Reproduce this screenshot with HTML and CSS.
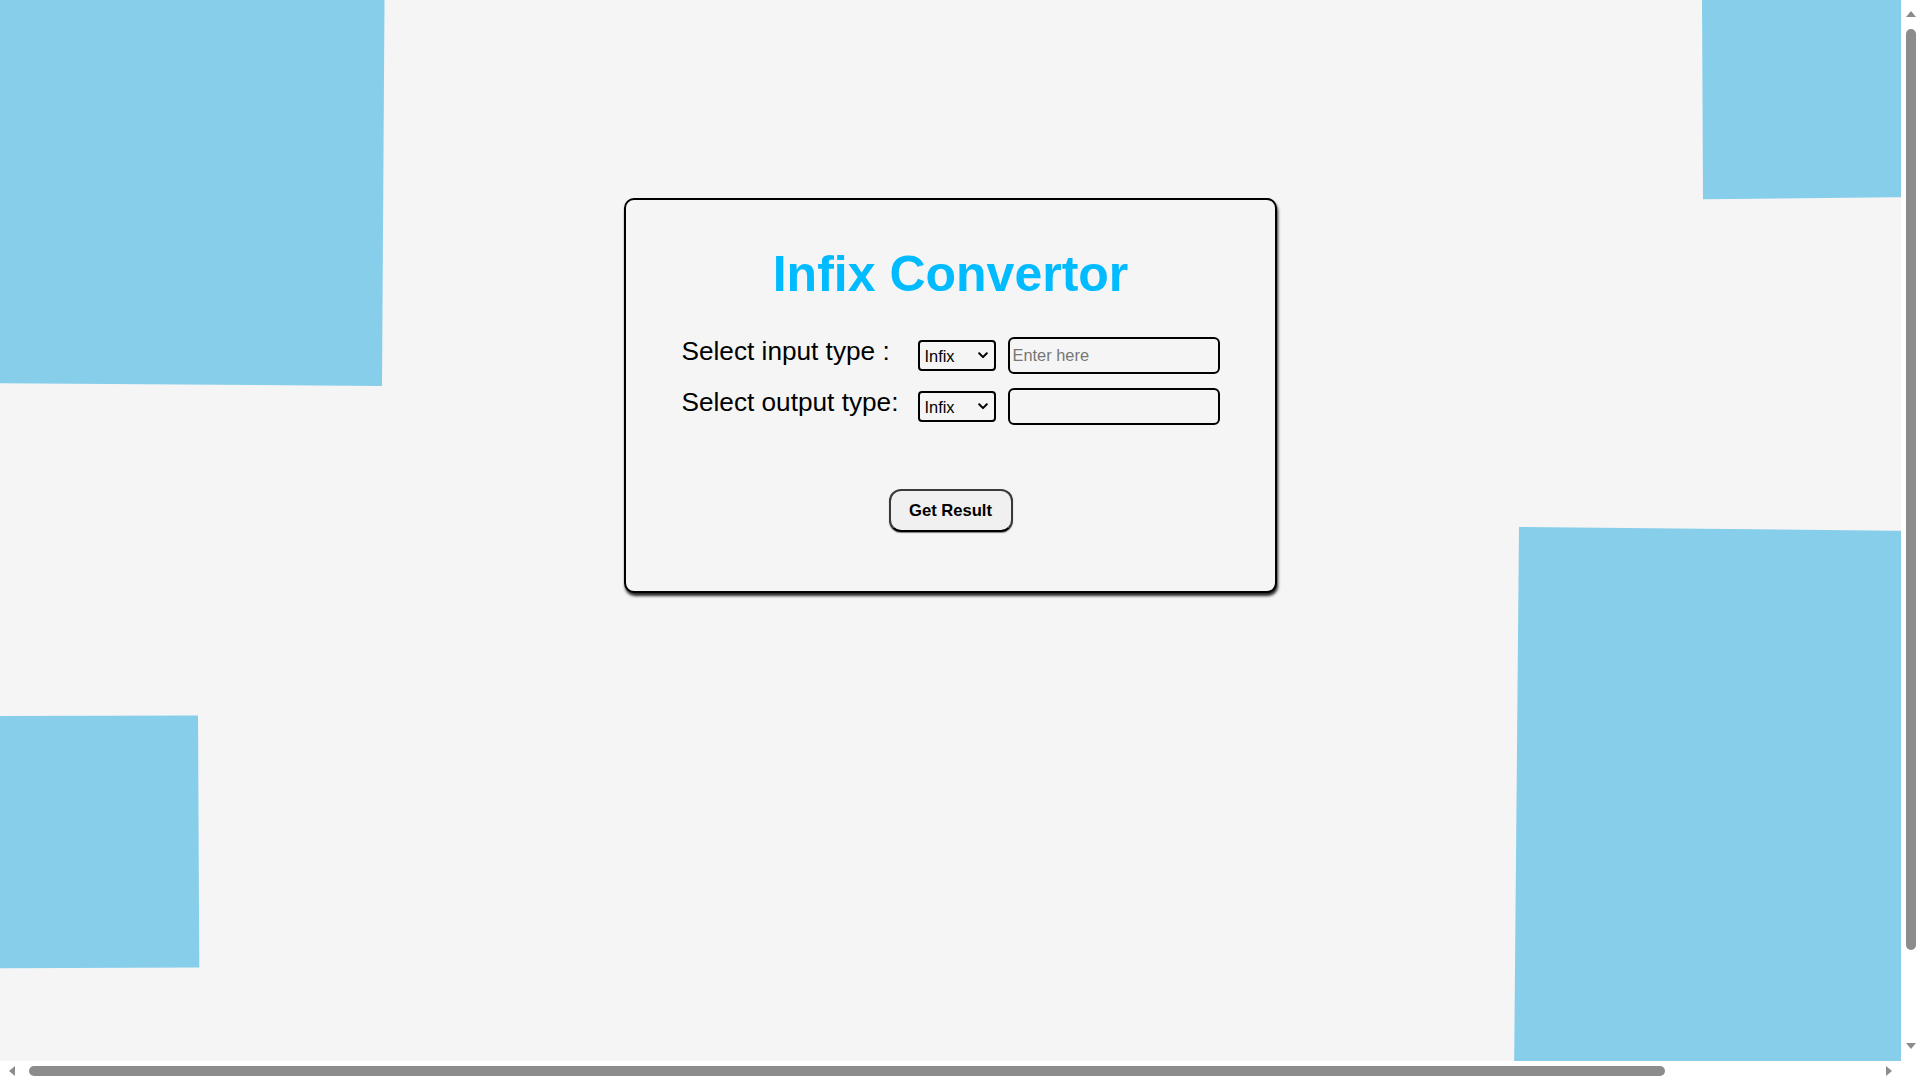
FILE: index.html
```html
<!DOCTYPE html>
<html lang="en">
<head>
<meta charset="utf-8">
<title>Infix Convertor</title>
<link rel="stylesheet" href="styles.css">
</head>
<body>
<svg class="backdrop" width="1920" height="1080" viewBox="0 0 1920 1080" aria-hidden="true">
  <polygon points="0,0 384.5,0 382,386 0,383.3"/>
  <polygon points="1702,0 1920,0 1920,197 1703,199.3"/>
  <polygon points="1519,527 1920,531 1920,1080 1514,1080"/>
  <polygon points="0,716 198,715.5 199.3,967.5 0,968.3"/>
</svg>
<main class="card">
  <h1 class="title">Infix Convertor</h1>
  <div class="form">
    <label class="label" for="inType">Select input type :</label>
    <span class="select-wrap">
      <select class="picker" id="inType">
        <option>Infix</option>
        <option>Prefix</option>
        <option>Postfix</option>
      </select>
      <svg class="chev" width="10" height="7" viewBox="0 0 10 7" aria-hidden="true"><path d="M1.2 1.3 L5 5.1 L8.8 1.3"/></svg>
    </span>
    <input class="field" type="text" placeholder="Enter here">
    <label class="label" for="outType">Select output type:</label>
    <span class="select-wrap">
      <select class="picker" id="outType">
        <option>Infix</option>
        <option>Prefix</option>
        <option>Postfix</option>
      </select>
      <svg class="chev" width="10" height="7" viewBox="0 0 10 7" aria-hidden="true"><path d="M1.2 1.3 L5 5.1 L8.8 1.3"/></svg>
    </span>
    <input class="field" type="text">
  </div>
  <div class="actions">
    <button class="btn" type="button">Get Result</button>
  </div>
</main>
<div class="vscroll" aria-hidden="true">
  <span class="arrow-up"></span>
  <span class="vthumb"></span>
  <span class="arrow-down"></span>
</div>
<div class="hscroll" aria-hidden="true">
  <span class="arrow-left"></span>
  <span class="hthumb"></span>
  <span class="arrow-right"></span>
</div>
<div class="corner" aria-hidden="true"></div>
</body>
</html>
```
FILE: styles.css
```css
html, body {
  margin: 0;
  padding: 0;
  overflow: hidden;
}
body {
  background: #f5f5f5;
  font-family: "Liberation Sans", Arial, sans-serif;
  width: 1920px;
  height: 1080px;
  position: relative;
}
.backdrop {
  position: absolute;
  left: 0;
  top: 0;
  display: block;
}
.backdrop polygon {
  fill: #87ceeb;
}
.card {
  position: relative;
  box-sizing: border-box;
  width: 653px;
  margin: 198px 0 0 624px;
  padding: 46px 0 59px;
  border: 2px solid #000;
  border-radius: 10px;
  background: #f5f5f5;
  box-shadow: 1px 3px 3px rgba(0, 0, 0, 0.85);
}
.title {
  margin: 0 0 35px;
  text-align: center;
  color: #00bbff;
  font-size: 50px;
  line-height: 56px;
  font-weight: bold;
}
.form {
  display: grid;
  grid-template-columns: 224px 78px 212px;
  grid-auto-rows: 37px;
  column-gap: 12px;
  row-gap: 14px;
  justify-content: center;
}
.label {
  align-self: start;
  font-size: 26.2px;
  line-height: 29px;
  color: #000;
  white-space: nowrap;
}
.select-wrap {
  position: relative;
  align-self: center;
  display: block;
  width: 78px;
  height: 31px;
}
.picker {
  appearance: none;
  -webkit-appearance: none;
  display: block;
  box-sizing: border-box;
  width: 78px;
  height: 31px;
  border: 2px solid #000;
  border-radius: 4px;
  background: #f5f5f5;
  color: #000;
  font-family: "Liberation Sans", Arial, sans-serif;
  font-size: 16.4px;
  padding: 0 0 0 5px;
  margin: 0;
}
.chev {
  position: absolute;
  right: 8px;
  top: 12px;
  pointer-events: none;
}
.chev path {
  fill: none;
  stroke: #000;
  stroke-width: 2;
  stroke-linecap: round;
  stroke-linejoin: round;
}
.field {
  box-sizing: border-box;
  width: 212px;
  height: 37px;
  border: 2px solid #000;
  border-radius: 6px;
  background: #f5f5f5;
  font-family: "Liberation Sans", Arial, sans-serif;
  font-size: 16.4px;
  padding: 0 3px;
  color: #000;
}
.field::placeholder {
  color: #767676;
}
.actions {
  display: flex;
  justify-content: center;
  margin-top: 64px;
}
.btn {
  box-sizing: border-box;
  width: 124px;
  height: 43px;
  border: 2px solid #3a3a3a;
  border-bottom-color: #000;
  border-radius: 12px;
  background: #f0f0f0;
  color: #000;
  font-family: "Liberation Sans", Arial, sans-serif;
  font-size: 16.6px;
  font-weight: bold;
  box-shadow: 0 1px 1px rgba(0, 0, 0, 0.5);
}

/* window scrollbars shown in the screenshot */
.vscroll {
  position: absolute;
  right: 0;
  top: 0;
  width: 19px;
  height: 1061px;
  background: #fff;
}
.hscroll {
  position: absolute;
  left: 0;
  bottom: 0;
  width: 1901px;
  height: 19px;
  background: #fff;
}
.corner {
  position: absolute;
  right: 0;
  bottom: 0;
  width: 19px;
  height: 19px;
  background: #fff;
}
.vthumb {
  position: absolute;
  left: 5px;
  top: 29px;
  width: 10px;
  height: 921px;
  border-radius: 5px;
  background: #8c8c8c;
}
.hthumb {
  position: absolute;
  top: 5px;
  left: 29px;
  width: 1636px;
  height: 10px;
  border-radius: 5px;
  background: #8c8c8c;
}
.arrow-up, .arrow-down, .arrow-left, .arrow-right {
  position: absolute;
  width: 0;
  height: 0;
}
.arrow-up {
  left: 5px;
  top: 11px;
  border-left: 5px solid transparent;
  border-right: 5px solid transparent;
  border-bottom: 6px solid #8c8c8c;
}
.arrow-down {
  left: 5px;
  bottom: 12px;
  border-left: 5px solid transparent;
  border-right: 5px solid transparent;
  border-top: 6px solid #8c8c8c;
}
.arrow-left {
  left: 9px;
  top: 5px;
  border-top: 5px solid transparent;
  border-bottom: 5px solid transparent;
  border-right: 6px solid #8c8c8c;
}
.arrow-right {
  right: 9px;
  top: 5px;
  border-top: 5px solid transparent;
  border-bottom: 5px solid transparent;
  border-left: 6px solid #8c8c8c;
}
```
